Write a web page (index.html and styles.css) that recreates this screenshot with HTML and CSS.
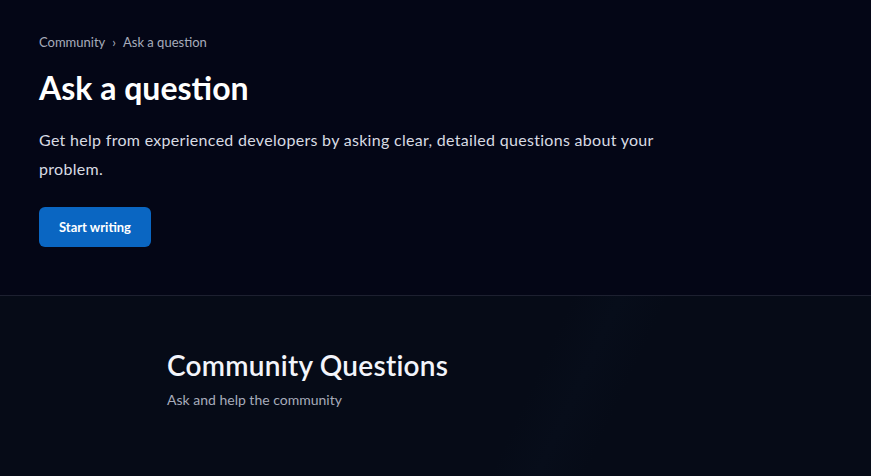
FILE: index.html
```html
<!DOCTYPE html>
<html lang="en">
<head>
<meta charset="utf-8">
<title>Ask a question</title>
<link rel="stylesheet" href="styles.css">
</head>
<body>
<section class="hero">
  <nav class="crumbs"><a href="#">Community</a><span class="sep">›</span><span>Ask a question</span></nav>
  <h1 class="title">Ask a question</h1>
  <p class="lead">Get help from experienced developers by asking clear, detailed questions about your problem.</p>
  <a class="btn" href="#">Start writing</a>
</section>
<section class="questions">
  <div class="container">
    <h2 class="q-title">Community Questions</h2>
    <p class="q-sub">Ask and help the community</p>
  </div>
</section>
</body>
</html>
```
FILE: styles.css
```css
* { box-sizing: border-box; }
html, body { margin: 0; height: 100%; }
body {
  background: #060b17;
  font-family: Lato, "Noto Sans", sans-serif;
  color: #e6e8ef;
}
.hero {
  background: #040616;
  padding: 33px 39px 48px;
  border-bottom: 1px solid #1d2030;
  height: 296px;
}
.crumbs {
  font-size: 13px;
  color: #a7acbb;
  display: flex;
  align-items: center;
  gap: 7px;
  line-height: 18px;
}
.crumbs a { color: #a7acbb; text-decoration: none; }
.title {
  margin: 17px 0 0;
  font-size: 32px;
  font-weight: 700;
  color: #ffffff;
  line-height: 40px;
}
.lead {
  margin: 17px 0 0;
  font-size: 16px;
  line-height: 29px;
  letter-spacing: 0.3px;
  color: #d8dbe3;
  max-width: 660px;
}
.btn {
  display: inline-flex;
  align-items: center;
  justify-content: center;
  margin-top: 24px;
  width: 112px;
  height: 40px;
  background: #0a66c2;
  color: #fff;
  font-weight: 700;
  font-size: 13px;
  border-radius: 6px;
  text-decoration: none;
}
.questions {
  background: linear-gradient(115deg, #060b17 0%, #060b17 60%, #070d1a 65%, #060b17 70%, #060b17 100%);
  min-height: 180px;
}
.container { padding: 51px 0 0 167px; }
.q-title {
  margin: 0;
  font-size: 28px;
  font-weight: 600;
  line-height: 36px;
  letter-spacing: 0.25px;
  color: #f3f5fb;
}
.q-sub {
  margin: 8px 0 0;
  font-size: 14px;
  color: #a7acbb;
}
```
